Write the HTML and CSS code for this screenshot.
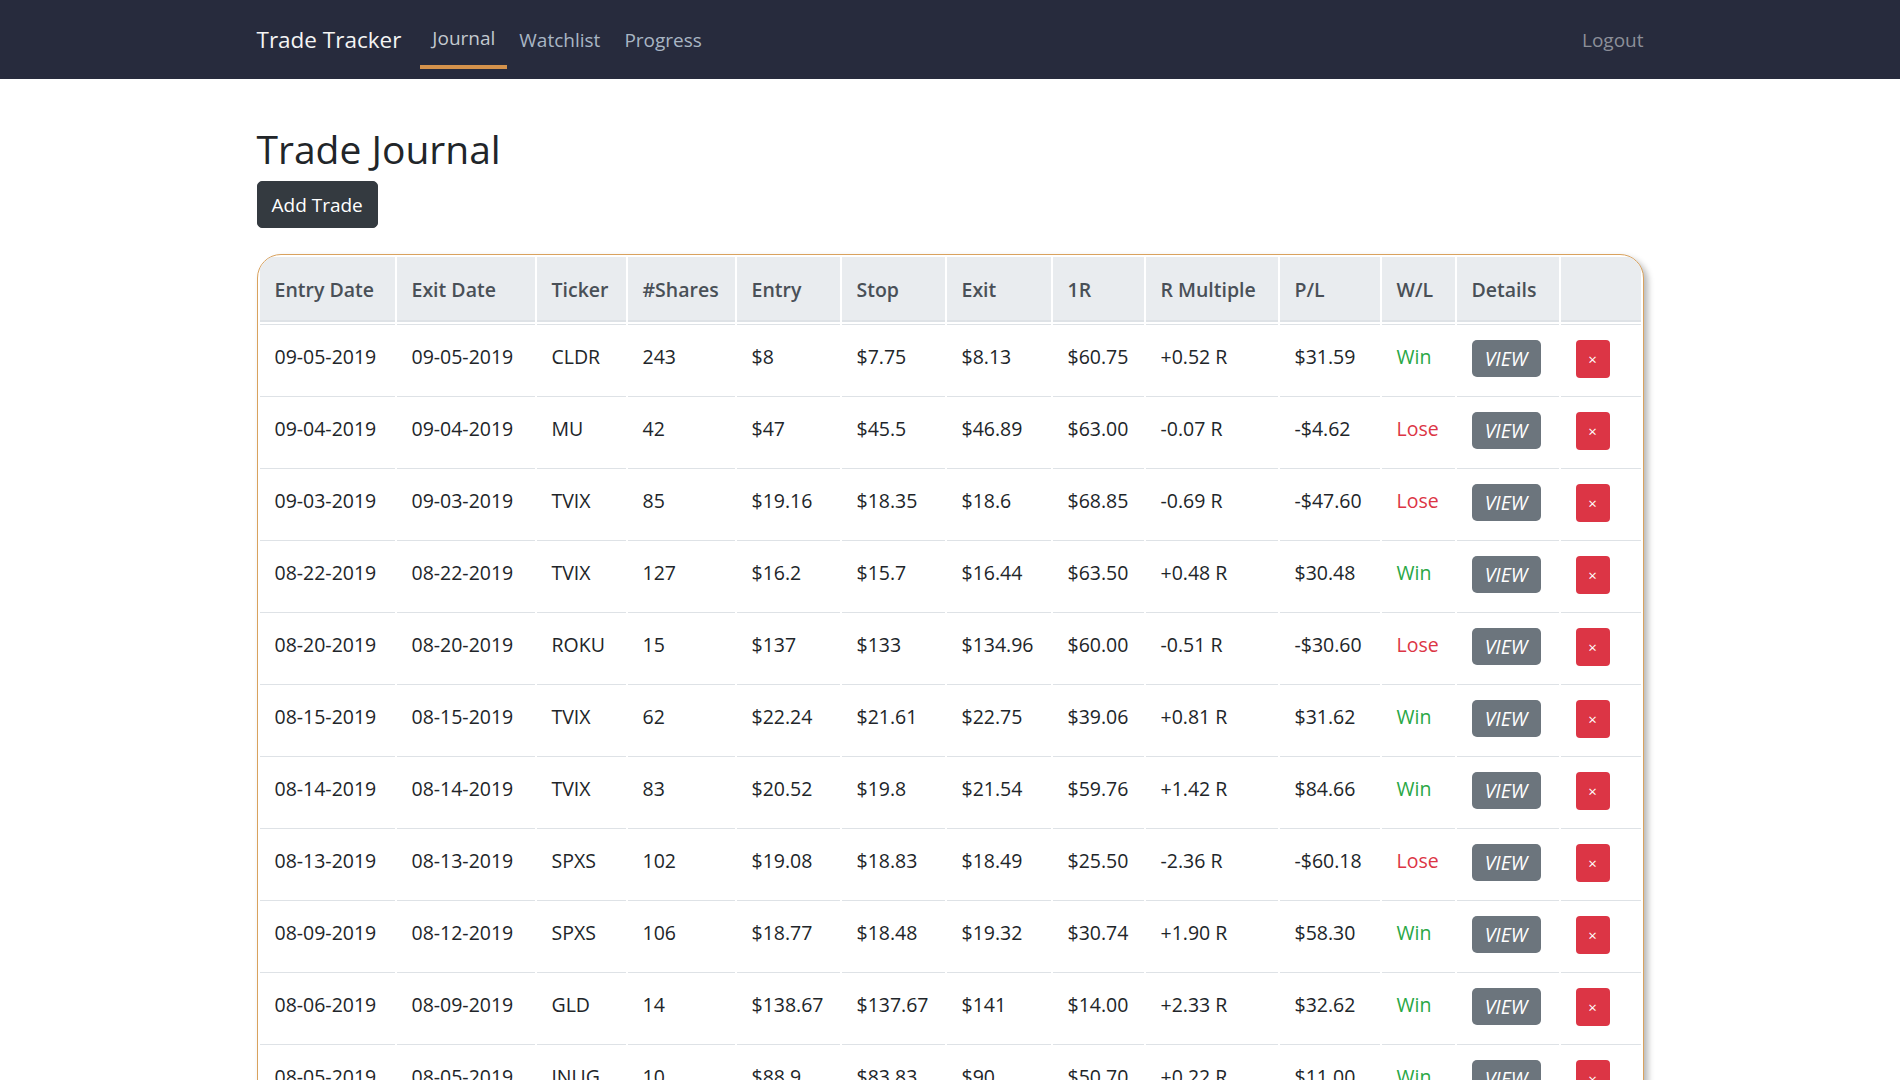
FILE: index.html
```html
<!DOCTYPE html>
<html lang="en">
<head>
<meta charset="utf-8">
<title>Trade Tracker</title>
<link rel="stylesheet" href="styles.css">
</head>
<body>
<header class="navbar">
  <div class="container nav-inner">
    <a class="brand" href="#">Trade Tracker</a>
    <nav class="nav-list">
      <a class="nav-link active" href="#">Journal</a>
      <a class="nav-link" href="#">Watchlist</a>
      <a class="nav-link" href="#">Progress</a>
    </nav>
    <a class="logout" href="#">Logout</a>
  </div>
</header>
<main class="container main">
  <h1 class="title">Trade Journal</h1>
  <button class="btn-dark">Add Trade</button>
  <div class="table-wrap">
    <table class="trades">
      <colgroup>
        <col class="w135"><col class="w138"><col class="w89"><col class="w107"><col class="w103"><col class="w103"><col class="w104"><col class="w91"><col class="w132"><col class="w100"><col class="w73"><col class="w102"><col class="w80">
      </colgroup>
      <thead>
        <tr><th>Entry Date</th><th>Exit Date</th><th>Ticker</th><th>#Shares</th><th>Entry</th><th>Stop</th><th>Exit</th><th>1R</th><th>R Multiple</th><th>P/L</th><th>W/L</th><th>Details</th><th></th></tr>
      </thead>
      <tbody>
        <tr><td>09-05-2019</td><td>09-05-2019</td><td>CLDR</td><td>243</td><td>$8</td><td>$7.75</td><td>$8.13</td><td>$60.75</td><td>+0.52 R</td><td>$31.59</td><td class="win">Win</td><td class="act"><button class="btn-view"><em>VIEW</em></button></td><td class="act"><button class="btn-del">×</button></td></tr>
        <tr><td>09-04-2019</td><td>09-04-2019</td><td>MU</td><td>42</td><td>$47</td><td>$45.5</td><td>$46.89</td><td>$63.00</td><td>-0.07 R</td><td>-$4.62</td><td class="lose">Lose</td><td class="act"><button class="btn-view"><em>VIEW</em></button></td><td class="act"><button class="btn-del">×</button></td></tr>
        <tr><td>09-03-2019</td><td>09-03-2019</td><td>TVIX</td><td>85</td><td>$19.16</td><td>$18.35</td><td>$18.6</td><td>$68.85</td><td>-0.69 R</td><td>-$47.60</td><td class="lose">Lose</td><td class="act"><button class="btn-view"><em>VIEW</em></button></td><td class="act"><button class="btn-del">×</button></td></tr>
        <tr><td>08-22-2019</td><td>08-22-2019</td><td>TVIX</td><td>127</td><td>$16.2</td><td>$15.7</td><td>$16.44</td><td>$63.50</td><td>+0.48 R</td><td>$30.48</td><td class="win">Win</td><td class="act"><button class="btn-view"><em>VIEW</em></button></td><td class="act"><button class="btn-del">×</button></td></tr>
        <tr><td>08-20-2019</td><td>08-20-2019</td><td>ROKU</td><td>15</td><td>$137</td><td>$133</td><td>$134.96</td><td>$60.00</td><td>-0.51 R</td><td>-$30.60</td><td class="lose">Lose</td><td class="act"><button class="btn-view"><em>VIEW</em></button></td><td class="act"><button class="btn-del">×</button></td></tr>
        <tr><td>08-15-2019</td><td>08-15-2019</td><td>TVIX</td><td>62</td><td>$22.24</td><td>$21.61</td><td>$22.75</td><td>$39.06</td><td>+0.81 R</td><td>$31.62</td><td class="win">Win</td><td class="act"><button class="btn-view"><em>VIEW</em></button></td><td class="act"><button class="btn-del">×</button></td></tr>
        <tr><td>08-14-2019</td><td>08-14-2019</td><td>TVIX</td><td>83</td><td>$20.52</td><td>$19.8</td><td>$21.54</td><td>$59.76</td><td>+1.42 R</td><td>$84.66</td><td class="win">Win</td><td class="act"><button class="btn-view"><em>VIEW</em></button></td><td class="act"><button class="btn-del">×</button></td></tr>
        <tr><td>08-13-2019</td><td>08-13-2019</td><td>SPXS</td><td>102</td><td>$19.08</td><td>$18.83</td><td>$18.49</td><td>$25.50</td><td>-2.36 R</td><td>-$60.18</td><td class="lose">Lose</td><td class="act"><button class="btn-view"><em>VIEW</em></button></td><td class="act"><button class="btn-del">×</button></td></tr>
        <tr><td>08-09-2019</td><td>08-12-2019</td><td>SPXS</td><td>106</td><td>$18.77</td><td>$18.48</td><td>$19.32</td><td>$30.74</td><td>+1.90 R</td><td>$58.30</td><td class="win">Win</td><td class="act"><button class="btn-view"><em>VIEW</em></button></td><td class="act"><button class="btn-del">×</button></td></tr>
        <tr><td>08-06-2019</td><td>08-09-2019</td><td>GLD</td><td>14</td><td>$138.67</td><td>$137.67</td><td>$141</td><td>$14.00</td><td>+2.33 R</td><td>$32.62</td><td class="win">Win</td><td class="act"><button class="btn-view"><em>VIEW</em></button></td><td class="act"><button class="btn-del">×</button></td></tr>
        <tr><td>08-05-2019</td><td>08-05-2019</td><td>JNUG</td><td>10</td><td>$88.9</td><td>$83.83</td><td>$90</td><td>$50.70</td><td>+0.22 R</td><td>$11.00</td><td class="win">Win</td><td class="act"><button class="btn-view"><em>VIEW</em></button></td><td class="act"><button class="btn-del">×</button></td></tr>
      </tbody>
    </table>
  </div>
</main>
</body>
</html>
```

FILE: styles.css
```css
html, body {
  margin: 0;
  padding: 0;
}
body {
  font-family: "Open Sans", "Noto Sans", sans-serif;
  font-size: 19.5px;
  color: #212529;
  background: #fff;
}
::-webkit-scrollbar { width: 0; height: 0; }

.container {
  width: 1387px;
  margin: 0 auto;
}

.navbar {
  background: #272b3d;
  height: 79px;
}
.nav-inner {
  display: flex;
  align-items: flex-start;
  height: 79px;
}
.brand {
  color: #f4f4f4;
  text-decoration: none;
  font-size: 22.5px;
  line-height: 30px;
  padding-top: 25px;
  margin-right: 19px;
}
.nav-list {
  display: flex;
}
.nav-link {
  display: block;
  box-sizing: border-box;
  height: 69px;
  padding: 25px 12px 0;
  line-height: 30px;
  font-size: 19px;
  color: #a9b6c4;
  text-decoration: none;
}
.nav-link.active {
  color: #c3c9cf;
  padding-top: 23px;
  border-bottom: 4px solid #d4924c;
}
.logout {
  margin-left: auto;
  padding-top: 25px;
  line-height: 30px;
  font-size: 19px;
  color: #8c8f99;
  text-decoration: none;
}

.main {
  padding-top: 45px;
}
.title {
  margin: 0 0 7px;
  font-size: 39px;
  line-height: 50px;
  font-weight: 500;
  color: #212529;
}
.btn-dark {
  display: block;
  height: 47px;
  padding: 0 14px;
  border: 1px solid #343a40;
  border-radius: 5px;
  background: #343a40;
  color: #fff;
  font-family: inherit;
  font-size: 19px;
  line-height: 30px;
  cursor: pointer;
}

.table-wrap {
  margin-top: 26px;
  border: 1px solid #d9a25e;
  border-radius: 24px 24px 0 0;
  overflow: hidden;
  box-shadow: 4px 4px 6px rgba(0, 0, 0, 0.28);
  background: #fff;
}
.trades {
  width: 100%;
  table-layout: fixed;
  border-collapse: separate;
  border-spacing: 2px;
}
.w135 { width: 135px; }
.w138 { width: 138px; }
.w89 { width: 89px; }
.w107 { width: 107px; }
.w103 { width: 103px; }
.w104 { width: 104px; }
.w91 { width: 91px; }
.w132 { width: 132px; }
.w100 { width: 100px; }
.w73 { width: 73px; }
.w102 { width: 102px; }
.w80 { width: 80px; }

.trades th {
  background: #e9ecef;
  color: #495057;
  font-weight: 600;
  text-align: left;
  line-height: 30px;
  padding: 18px 10px 15px 15px;
  border-bottom: 2px solid #dee2e6;
  white-space: nowrap;
}
.trades td {
  border-top: 1px solid #dee2e6;
  padding: 17px 10px 14px 15px;
  line-height: 30px;
  vertical-align: top;
  white-space: nowrap;
}
.trades td.act {
  padding-top: 15px;
  padding-bottom: 16px;
}
.win { color: #28a745; }
.lose { color: #dc3545; }

.btn-view {
  display: block;
  width: 69px;
  height: 37px;
  padding: 0;
  border: none;
  border-radius: 5px;
  background: #6c757d;
  color: #fff;
  font-family: inherit;
  font-size: 19.5px;
  line-height: 37px;
  cursor: pointer;
}
.btn-view em {
  font-style: italic;
}
.btn-del {
  display: block;
  width: 34px;
  height: 38px;
  padding: 0;
  border: none;
  border-radius: 4px;
  background: #dc3545;
  color: #fff;
  font-family: inherit;
  font-size: 15px;
  line-height: 38px;
  cursor: pointer;
}
```
